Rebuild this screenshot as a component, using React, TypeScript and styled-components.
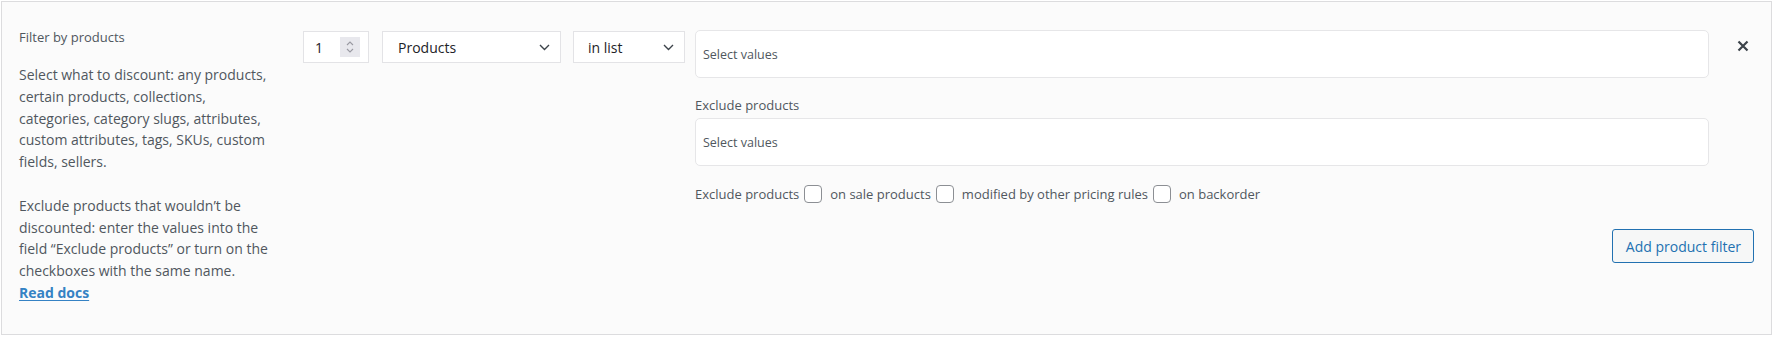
import React from "react";
import styled, { createGlobalStyle } from "styled-components";

const GlobalStyle = createGlobalStyle`
  body {
    margin: 0;
    background: #fff;
    font-family: "Open Sans", "Noto Sans", sans-serif;
    color: #50575e;
  }
`;

const Panel = styled.section`
  box-sizing: border-box;
  width: 1771px;
  height: 334px;
  margin: 1px 0 0 1px;
  padding: 28px 17px 0 17px;
  border: 1px solid #dcdcde;
  background: #fbfbfb;
  display: grid;
  grid-template-columns: 266px 1fr;
  column-gap: 18px;
`;

const Aside = styled.div`
  display: flex;
  flex-direction: column;
`;

const Title = styled.div`
  margin-top: -1px;
  font-size: 13px;
  line-height: 16px;
  color: #50575e;
`;

const Help = styled.p`
  margin: 19px 0 0;
  font-size: 14px;
  line-height: 21.8px;
  white-space: nowrap;
  color: #50575e;
`;

const DocsLink = styled.a`
  color: #3582c4;
  font-weight: 700;
  text-decoration: underline;
  text-underline-offset: 2px;
`;

const Main = styled.div`
  display: flex;
  flex-direction: column;
`;

const TopRow = styled.div`
  display: flex;
  align-items: flex-start;
`;

const Box = styled.div<{ $w: number; $ml: number; $pl: number }>`
  box-sizing: border-box;
  width: ${(p) => p.$w}px;
  height: 32px;
  margin: 1px 0 0 ${(p) => p.$ml}px;
  padding: 0 10px 0 ${(p) => p.$pl}px;
  background: #fff;
  border: 1px solid #e3e3e6;
  display: flex;
  align-items: center;
  justify-content: space-between;
  font-size: 14px;
  color: #1d2327;
`;

const Spinner = styled.span`
  width: 20px;
  height: 20px;
  margin-right: -2px;
  background: #e8e8ed;
  display: flex;
  align-items: center;
  justify-content: center;
`;

const ValuesCol = styled.div`
  flex: 1;
  margin-left: 10px;
  display: flex;
  flex-direction: column;
`;

const ValuesInput = styled.div`
  box-sizing: border-box;
  height: 48px;
  padding-left: 7px;
  background: #fff;
  border: 1px solid #e6e6e8;
  border-radius: 5px;
  display: flex;
  align-items: center;
  font-size: 12.5px;
  color: #50575e;
`;

const FieldLabel = styled.div`
  margin: 18.5px 0 5.5px;
  font-size: 13px;
  line-height: 16px;
`;

const CheckRow = styled.div`
  margin-top: 19px;
  height: 18px;
  display: flex;
  align-items: center;
  font-size: 13px;
`;

const Check = styled.span`
  box-sizing: border-box;
  width: 18px;
  height: 18px;
  margin: 0 8px 0 5px;
  border: 1px solid #8c8f94;
  border-radius: 4px;
  background: #fff;
`;

const Close = styled.button`
  width: 45px;
  height: 32px;
  padding: 0 5px 0 0;
  border: 0;
  background: none;
  display: flex;
  align-items: center;
  justify-content: flex-end;
  cursor: pointer;
`;

const Footer = styled.div`
  margin-top: 26px;
  display: flex;
  justify-content: flex-end;
`;

const AddButton = styled.button`
  box-sizing: border-box;
  height: 34px;
  padding: 0 12px 0 13px;
  border: 1px solid #2271b1;
  border-radius: 3px;
  background: #f6f7f7;
  color: #2271b1;
  font-family: inherit;
  font-size: 14px;
`;

const Chevron = () => (
  <svg width="11" height="7" viewBox="0 0 11 7">
    <path d="M1 1l4.5 4.5L10 1" fill="none" stroke="#3c434a" strokeWidth="1.4" />
  </svg>
);

const SpinIcon = () => (
  <svg width="10" height="14" viewBox="0 0 10 14">
    <path d="M2 5l3-3 3 3M2 9l3 3 3-3" fill="none" stroke="#9a9aa2" strokeWidth="1.1" />
  </svg>
);

const Cross = () => (
  <svg width="12" height="12" viewBox="0 0 12 12">
    <path d="M1.5 1.5l9 9M10.5 1.5l-9 9" stroke="#3c434a" strokeWidth="2.2" />
  </svg>
);

export default function App() {
  return (
    <>
      <GlobalStyle />
      <Panel>
        <Aside>
          <Title>Filter by products</Title>
          <Help>
            Select what to discount: any products,
            <br />
            certain products, collections,
            <br />
            categories, category slugs, attributes,
            <br />
            custom attributes, tags, SKUs, custom
            <br />
            fields, sellers.
            <br />
            <br />
            Exclude products that wouldn’t be
            <br />
            discounted: enter the values into the
            <br />
            field “Exclude products” or turn on the
            <br />
            checkboxes with the same name.
            <br />
            <DocsLink href="#">Read docs</DocsLink>
          </Help>
        </Aside>
        <Main>
          <TopRow>
            <Box $w={66} $ml={0} $pl={11}>
              1
              <Spinner>
                <SpinIcon />
              </Spinner>
            </Box>
            <Box $w={179} $ml={13} $pl={15}>
              Products
              <Chevron />
            </Box>
            <Box $w={112} $ml={12} $pl={14}>
              in list
              <Chevron />
            </Box>
            <ValuesCol>
              <ValuesInput>Select values</ValuesInput>
              <FieldLabel>Exclude products</FieldLabel>
              <ValuesInput>Select values</ValuesInput>
              <CheckRow>
                Exclude products
                <Check />
                on sale products
                <Check />
                modified by other pricing rules
                <Check />
                on backorder
              </CheckRow>
            </ValuesCol>
            <Close aria-label="Remove">
              <Cross />
            </Close>
          </TopRow>
          <Footer>
            <AddButton>Add product filter</AddButton>
          </Footer>
        </Main>
      </Panel>
    </>
  );
}
